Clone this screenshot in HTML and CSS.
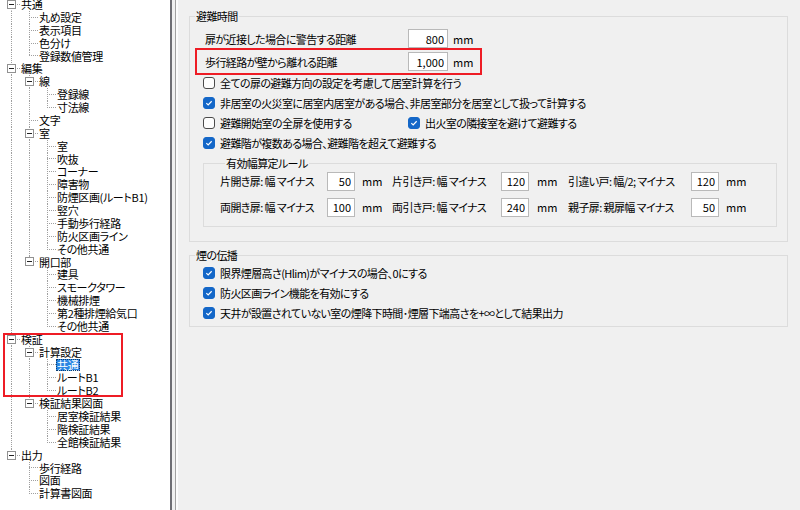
FILE: index.html
```html
<!DOCTYPE html>
<html lang="ja">
<head>
  <meta charset="UTF-8" />
  <title>計算設定 - 共通</title>
  <link rel="stylesheet" href="styles.css">
</head>
<body>
  <div class="tree">
    <div class="nodes">
      <div class="node"><span class="ln ln-f"><i class="box"></i></span><span class="lbl">共通</span></div>
      <div class="node"><span class="ln ln-v"></span><span class="ln ln-t"></span><span class="lbl">丸め設定</span></div>
      <div class="node"><span class="ln ln-v"></span><span class="ln ln-t"></span><span class="lbl">表示項目</span></div>
      <div class="node"><span class="ln ln-v"></span><span class="ln ln-t"></span><span class="lbl">色分け</span></div>
      <div class="node"><span class="ln ln-v"></span><span class="ln ln-l"></span><span class="lbl">登録数値管理</span></div>
      <div class="node"><span class="ln ln-t"><i class="box"></i></span><span class="lbl">編集</span></div>
      <div class="node"><span class="ln ln-v"></span><span class="ln ln-t"><i class="box"></i></span><span class="lbl">線</span></div>
      <div class="node"><span class="ln ln-v"></span><span class="ln ln-v"></span><span class="ln ln-t"></span><span class="lbl">登録線</span></div>
      <div class="node"><span class="ln ln-v"></span><span class="ln ln-v"></span><span class="ln ln-l"></span><span class="lbl">寸法線</span></div>
      <div class="node"><span class="ln ln-v"></span><span class="ln ln-t"></span><span class="lbl">文字</span></div>
      <div class="node"><span class="ln ln-v"></span><span class="ln ln-t"><i class="box"></i></span><span class="lbl">室</span></div>
      <div class="node"><span class="ln ln-v"></span><span class="ln ln-v"></span><span class="ln ln-t"></span><span class="lbl">室</span></div>
      <div class="node"><span class="ln ln-v"></span><span class="ln ln-v"></span><span class="ln ln-t"></span><span class="lbl">吹抜</span></div>
      <div class="node"><span class="ln ln-v"></span><span class="ln ln-v"></span><span class="ln ln-t"></span><span class="lbl">コーナー</span></div>
      <div class="node"><span class="ln ln-v"></span><span class="ln ln-v"></span><span class="ln ln-t"></span><span class="lbl">障害物</span></div>
      <div class="node"><span class="ln ln-v"></span><span class="ln ln-v"></span><span class="ln ln-t"></span><span class="lbl">防煙区画(ルートB1)</span></div>
      <div class="node"><span class="ln ln-v"></span><span class="ln ln-v"></span><span class="ln ln-t"></span><span class="lbl">竪穴</span></div>
      <div class="node"><span class="ln ln-v"></span><span class="ln ln-v"></span><span class="ln ln-t"></span><span class="lbl">手動歩行経路</span></div>
      <div class="node"><span class="ln ln-v"></span><span class="ln ln-v"></span><span class="ln ln-t"></span><span class="lbl">防火区画ライン</span></div>
      <div class="node"><span class="ln ln-v"></span><span class="ln ln-v"></span><span class="ln ln-l"></span><span class="lbl">その他共通</span></div>
      <div class="node"><span class="ln ln-v"></span><span class="ln ln-l"><i class="box"></i></span><span class="lbl">開口部</span></div>
      <div class="node"><span class="ln ln-v"></span><span class="ln"></span><span class="ln ln-t"></span><span class="lbl">建具</span></div>
      <div class="node"><span class="ln ln-v"></span><span class="ln"></span><span class="ln ln-t"></span><span class="lbl">スモークタワー</span></div>
      <div class="node"><span class="ln ln-v"></span><span class="ln"></span><span class="ln ln-t"></span><span class="lbl">機械排煙</span></div>
      <div class="node"><span class="ln ln-v"></span><span class="ln"></span><span class="ln ln-t"></span><span class="lbl">第2種排煙給気口</span></div>
      <div class="node"><span class="ln ln-v"></span><span class="ln"></span><span class="ln ln-l"></span><span class="lbl">その他共通</span></div>
      <div class="mark-tree">
        <div class="node"><span class="ln ln-t"><i class="box"></i></span><span class="lbl">検証</span></div>
        <div class="node"><span class="ln ln-v"></span><span class="ln ln-t"><i class="box"></i></span><span class="lbl">計算設定</span></div>
        <div class="node"><span class="ln ln-v"></span><span class="ln ln-v"></span><span class="ln ln-t"></span><span class="lbl selected">共通</span></div>
        <div class="node"><span class="ln ln-v"></span><span class="ln ln-v"></span><span class="ln ln-t"></span><span class="lbl">ルートB1</span></div>
        <div class="node"><span class="ln ln-v"></span><span class="ln ln-v"></span><span class="ln ln-l"></span><span class="lbl">ルートB2</span></div>
      </div>
      <div class="node"><span class="ln ln-v"></span><span class="ln ln-l"><i class="box"></i></span><span class="lbl">検証結果図面</span></div>
      <div class="node"><span class="ln ln-v"></span><span class="ln"></span><span class="ln ln-t"></span><span class="lbl">居室検証結果</span></div>
      <div class="node"><span class="ln ln-v"></span><span class="ln"></span><span class="ln ln-t"></span><span class="lbl">階検証結果</span></div>
      <div class="node"><span class="ln ln-v"></span><span class="ln"></span><span class="ln ln-l"></span><span class="lbl">全館検証結果</span></div>
      <div class="node"><span class="ln ln-l"><i class="box"></i></span><span class="lbl">出力</span></div>
      <div class="node"><span class="ln"></span><span class="ln ln-t"></span><span class="lbl">歩行経路</span></div>
      <div class="node"><span class="ln"></span><span class="ln ln-t"></span><span class="lbl">図面</span></div>
      <div class="node"><span class="ln"></span><span class="ln ln-l"></span><span class="lbl">計算書図面</span></div>
    </div>
  </div>

  <div class="splitter"></div>

  <main class="panel">
    <fieldset class="group">
      <legend>避難時間</legend>
      <div class="field first">
        <span class="field-name">扉が近接した場合に警告する距離</span>
        <input class="num" value="800" readonly><span class="unit">mm</span>
      </div>
      <div class="mark">
        <span class="field-name">歩行経路が壁から離れる距離</span>
        <input class="num" value="1,000" readonly><span class="unit">mm</span>
      </div>
      <div class="check first-check"><span class="cb"></span>全ての扉の避難方向の設定を考慮して居室計算を行う</div>
      <div class="check"><span class="cb on"><svg viewBox="0 0 12 12"><path d="M2.8 6.1 5 8.2 9.2 3.9"/></svg></span>非居室の火災室に居室内居室がある場合、非居室部分を居室として扱って計算する</div>
      <div class="check">
        <span class="check-col"><span class="cb"></span>避難開始室の全扉を使用する</span>
        <span class="cb on"><svg viewBox="0 0 12 12"><path d="M2.8 6.1 5 8.2 9.2 3.9"/></svg></span>出火室の隣接室を避けて避難する
      </div>
      <div class="check"><span class="cb on"><svg viewBox="0 0 12 12"><path d="M2.8 6.1 5 8.2 9.2 3.9"/></svg></span>避難階が複数ある場合、避難階を超えて避難する</div>

      <fieldset class="subgroup">
        <legend>有効幅算定ルール</legend>
        <div class="rules">
          <span>片開き扉: 幅 マイナス</span>
          <input class="num small" value="50" readonly>
          <span class="unit-cell">mm</span>
          <span>片引き戸: 幅 マイナス</span>
          <input class="num small" value="120" readonly>
          <span class="unit-cell">mm</span>
          <span>引違い戸: 幅/2; マイナス</span>
          <input class="num small" value="120" readonly>
          <span class="unit-cell">mm</span>

          <span>両開き扉: 幅 マイナス</span>
          <input class="num small" value="100" readonly>
          <span class="unit-cell">mm</span>
          <span>両引き戸: 幅 マイナス</span>
          <input class="num small" value="240" readonly>
          <span class="unit-cell">mm</span>
          <span>親子扉: 親扉幅 マイナス</span>
          <input class="num small" value="50" readonly>
          <span class="unit-cell">mm</span>
        </div>
      </fieldset>
    </fieldset>

    <fieldset class="group smoke">
      <legend>煙の伝播</legend>
      <div class="check"><span class="cb on"><svg viewBox="0 0 12 12"><path d="M2.8 6.1 5 8.2 9.2 3.9"/></svg></span>限界煙層高さ(Hlim)がマイナスの場合、0にする</div>
      <div class="check"><span class="cb on"><svg viewBox="0 0 12 12"><path d="M2.8 6.1 5 8.2 9.2 3.9"/></svg></span>防火区画ライン機能を有効にする</div>
      <div class="check"><span class="cb on"><svg viewBox="0 0 12 12"><path d="M2.8 6.1 5 8.2 9.2 3.9"/></svg></span>天井が設置されていない室の煙降下時間･煙層下端高さを+∞として結果出力</div>
    </fieldset>
  </main>
</body>
</html>
```

FILE: styles.css
```css
:root {
  --dv: repeating-linear-gradient(to bottom, #a0a0a0 0 1px, transparent 1px 2px);
  --dh: repeating-linear-gradient(to right, #a0a0a0 0 1px, transparent 1px 2px);
}

body {
  margin: 0;
  width: 800px;
  height: 510px;
  overflow: hidden;
  display: flex;
  font-family: "Noto Sans CJK JP", "Noto Sans", sans-serif;
  font-feature-settings: "palt";
  font-size: 11px;
  line-height: 16px;
  color: #000;
  background: #f0f0f0;
}

/* tree */

.tree {
  flex: none;
  width: 170px;
  background: #fff;
  overflow: hidden;
  letter-spacing: -0.35px;
}

.nodes {
  margin-top: -2px;
}

.node {
  display: flex;
  height: 12.88px;
  line-height: 12.88px;
  padding-left: 2px;
  white-space: nowrap;
}

.ln {
  flex: none;
  width: 18px;
  height: 100%;
  box-sizing: border-box;
  padding-left: 5px;
  display: flex;
  align-items: center;
}

.ln-v {
  background: var(--dv) 9px 0 / 1px 100% no-repeat;
}

.ln-t {
  background: var(--dh) 9px 50% / 9px 1px no-repeat,
              var(--dv) 9px 0 / 1px 100% no-repeat;
}

.ln-l {
  background: var(--dh) 9px 50% / 9px 1px no-repeat,
              var(--dv) 9px 0 / 1px 50% no-repeat;
}

.ln-f {
  background: var(--dh) 9px 50% / 9px 1px no-repeat,
              var(--dv) 9px 100% / 1px 50% no-repeat;
}

.box {
  width: 9px;
  height: 9px;
  box-sizing: border-box;
  border: 1px solid #919191;
  background: #fff;
  display: flex;
  align-items: center;
  justify-content: center;
}

.box::before {
  content: "";
  width: 5px;
  height: 1px;
  background: #222;
}

.lbl {
  padding: 0 2px 0 1px;
}

.lbl.selected {
  background: #2b86e3;
  color: #fff;
  outline: 1px dotted #0c3d70;
  outline-offset: -1px;
}

.mark-tree {
  margin-left: 3px;
  width: 120px;
  outline: 2px solid #ee1c25;
  outline-offset: -2px;
}

.mark-tree .node {
  margin-left: -3px;
}

.splitter {
  flex: none;
  width: 8px;
  background: linear-gradient(to right, #6e6e74 0 2px, #f0f0f0 2px 5px, #a0a0a0 5px 6px, #fcfcfc 6px 8px);
}

/* settings panel */

.panel {
  flex: 1;
  min-width: 0;
  padding: 8px 12px 0 11px;
  letter-spacing: -0.6px;
}

fieldset {
  margin: 0;
  padding: 0;
  min-width: 0;
  border: 1px solid #dcdcdc;
}

legend {
  line-height: 16px;
  padding: 0 1px;
  margin-left: 5px;
}

.field {
  display: flex;
  align-items: center;
  height: 19px;
  padding-left: 15px;
}

.field.first {
  margin-top: 5px;
}

.field-name {
  width: 203px;
  flex: none;
}

.num {
  width: 40px;
  height: 19px;
  box-sizing: border-box;
  margin: 0;
  padding: 0 3px;
  border: 1px solid #b9b9b9;
  background: #fff;
  font: inherit;
  color: #000;
  text-align: right;
  outline: none;
}

.num.small {
  width: 28px;
}

.unit {
  margin-left: 5px;
}

.mark {
  margin-left: 5px;
  width: 287px;
  height: 27px;
  box-sizing: border-box;
  border: 2px solid #ee1c25;
  padding-left: 8px;
  display: flex;
  align-items: center;
}

.check {
  display: flex;
  align-items: center;
  height: 20px;
  padding-left: 13px;
  white-space: nowrap;
}

.check.first-check {
  margin-top: -2px;
}

.check-col {
  display: flex;
  align-items: center;
  width: 205px;
}

.cb {
  flex: none;
  width: 12px;
  height: 12px;
  box-sizing: border-box;
  margin-right: 5px;
  border: 1px solid #4a4a4a;
  border-radius: 3px;
  background: #fdfdfd;
  display: flex;
}

.cb.on {
  background: #1467c8;
  border-color: #1467c8;
}

.cb svg {
  width: 10px;
  height: 10px;
}

.cb path {
  fill: none;
  stroke: #fff;
  stroke-width: 1.4;
}

.subgroup {
  margin: 2px 10px 14px 13px;
  padding: 0 0 9px 16px;
}

.rules {
  display: grid;
  grid-template-columns: 107px 28px 37px 109px 29px 38px 123px 28px auto;
  grid-auto-rows: 20px;
  row-gap: 6px;
  align-items: center;
  white-space: nowrap;
}

.unit-cell {
  padding-left: 7px;
  letter-spacing: 0;
}

.unit {
  letter-spacing: 0;
}

.smoke {
  margin-top: 5px;
  padding-bottom: 3px;
}
```
